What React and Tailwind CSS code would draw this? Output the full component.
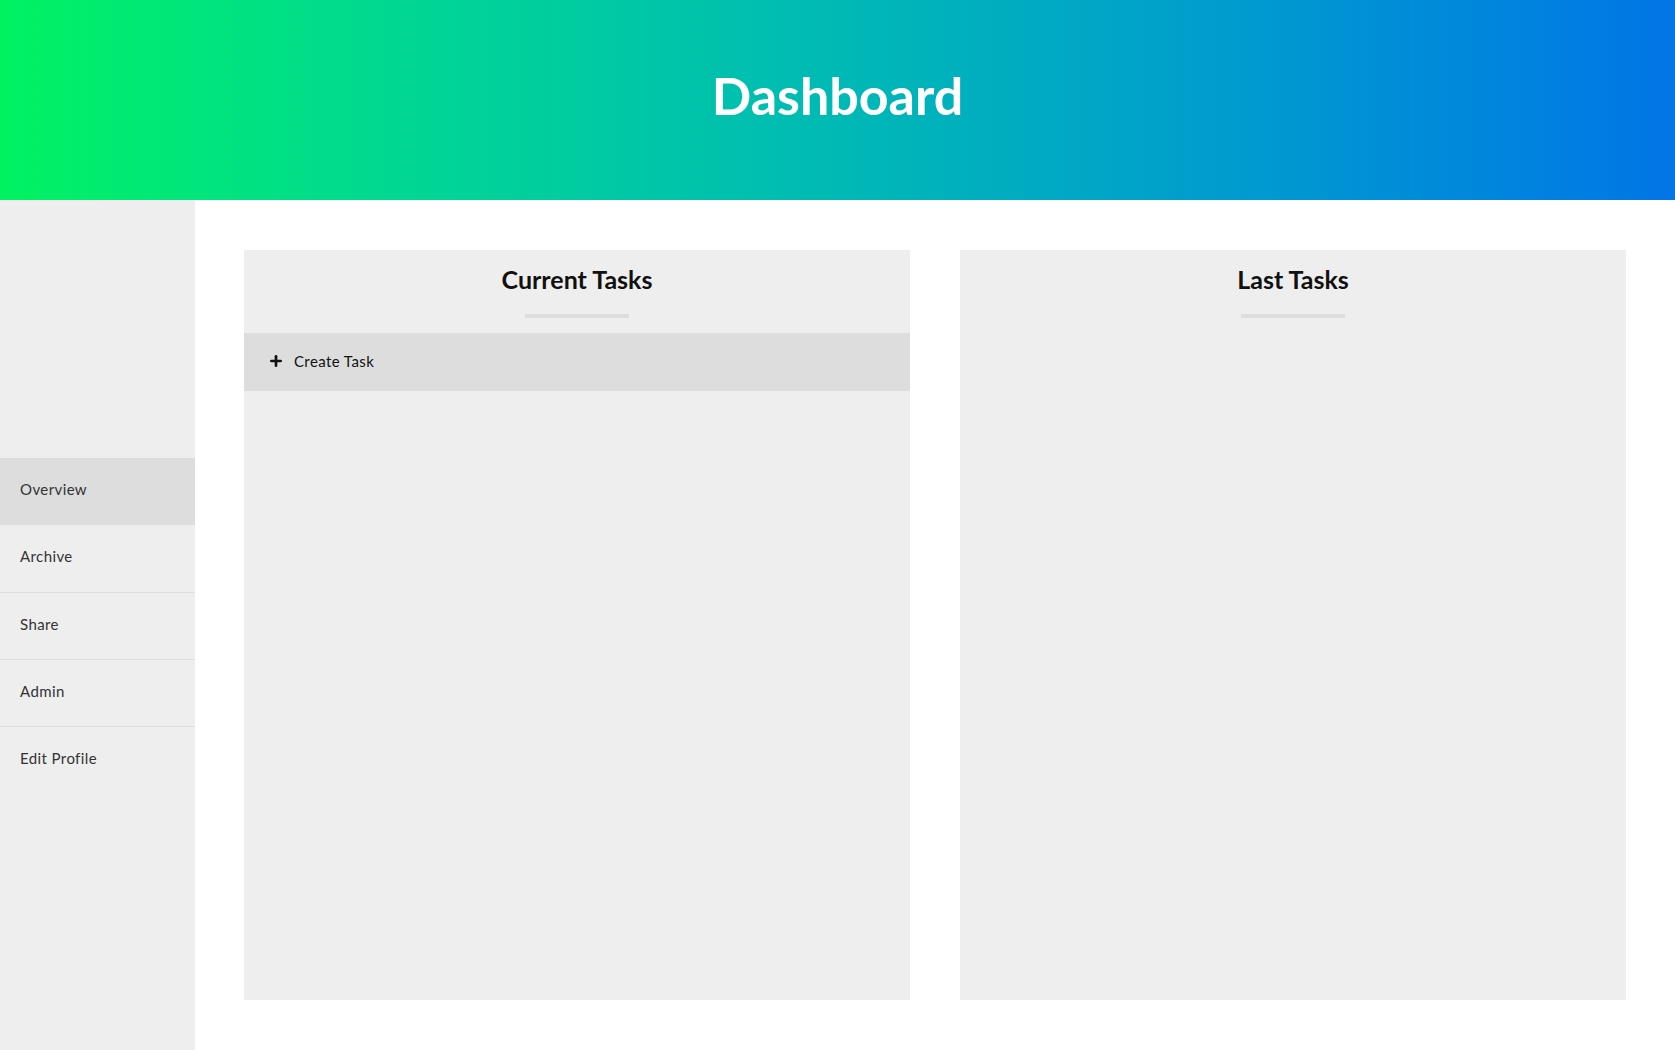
import { Plus } from 'lucide-react'

const navItems = ['Overview', 'Archive', 'Share', 'Admin', 'Edit Profile']

function TaskPanel({ title, children }) {
  return (
    <div className="bg-[#eeeeee] flex flex-col">
      <div className="h-[83px] flex flex-col items-center pt-[13px]">
        <h2 className="text-[25px] font-bold text-[#111] leading-[32px]">{title}</h2>
        <div className="mt-[19px] w-[104px] h-[4px] bg-[#dddddd]" />
      </div>
      {children}
    </div>
  )
}

export default function App() {
  return (
    <div className="min-h-screen bg-white font-['Lato','Liberation_Sans',sans-serif]">
      <header className="h-[200px] bg-gradient-to-r from-[#00f260] to-[#0575e6] flex items-center justify-center">
        <h1 className="text-white text-[52px] font-bold leading-none -mt-[11px]">Dashboard</h1>
      </header>

      <div className="flex h-[850px]">
        <aside className="w-[195px] shrink-0 bg-[#eeeeee] flex flex-col justify-center">
          {navItems.map((item, i) => (
            <div
              key={item}
              className={`h-[67px] flex items-center pl-[20px] pb-[3px] text-[15px] text-[#333] tracking-[0.4px] ${i === 0 ? 'bg-[#dddddd]' : ''} ${i > 1 ? 'border-t border-[#dddddd]' : ''}`}
            >
              {item}
            </div>
          ))}
        </aside>

        <main className="flex-1 pl-[49px] pr-[49px] pt-[50px]">
          <div className="grid grid-cols-2 gap-[50px] h-[750px]">
            <TaskPanel title="Current Tasks">
              <button className="h-[58px] bg-[#dddddd] flex items-center gap-[10px] pl-[24px] pb-[2px] text-[15px] text-[#111] tracking-[0.4px]">
                <Plus className="w-[16px] h-[16px]" strokeWidth={4} />
                Create Task
              </button>
            </TaskPanel>
            <TaskPanel title="Last Tasks" />
          </div>
        </main>
      </div>
    </div>
  )
}
